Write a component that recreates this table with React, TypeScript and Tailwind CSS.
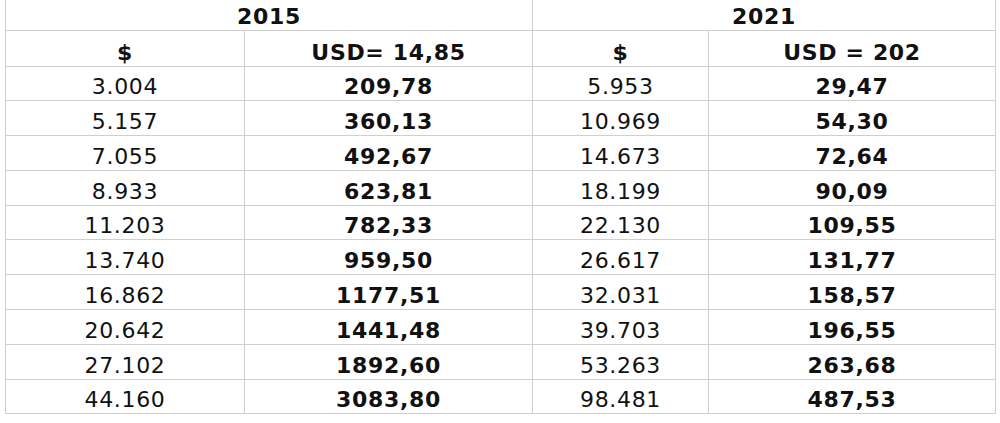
const rows: [string, string, string, string][] = [
  ["3.004", "209,78", "5.953", "29,47"],
  ["5.157", "360,13", "10.969", "54,30"],
  ["7.055", "492,67", "14.673", "72,64"],
  ["8.933", "623,81", "18.199", "90,09"],
  ["11.203", "782,33", "22.130", "109,55"],
  ["13.740", "959,50", "26.617", "131,77"],
  ["16.862", "1177,51", "32.031", "158,57"],
  ["20.642", "1441,48", "39.703", "196,55"],
  ["27.102", "1892,60", "53.263", "263,68"],
  ["44.160", "3083,80", "98.481", "487,53"],
];

const cell = "border border-[#cfcfcf] text-center align-bottom pb-[2px] leading-[22px]";

export default function App() {
  return (
    <div className="w-[1000px] h-[423px] bg-white pl-[5px] text-[#111] font-['DejaVu_Sans',sans-serif] text-[22px] tracking-[0.03em]">
      <table className="table-fixed border-collapse w-[990px]">
        <colgroup>
          <col className="w-[239px]" />
          <col className="w-[288px]" />
          <col className="w-[176px]" />
          <col className="w-[287px]" />
        </colgroup>
        <thead>
          <tr className="h-[30px]">
            <th colSpan={2} className={`${cell} border-t-0 font-bold`}>2015</th>
            <th colSpan={2} className={`${cell} border-t-0 font-bold`}>2021</th>
          </tr>
          <tr className="h-[36px]">
            <th className={`${cell} font-bold`}>$</th>
            <th className={`${cell} font-bold`}>USD= 14,85</th>
            <th className={`${cell} font-bold`}>$</th>
            <th className={`${cell} font-bold`}>USD = 202</th>
          </tr>
        </thead>
        <tbody>
          {rows.map((r) => (
            <tr key={r[0]} className="h-[34.8px]">
              <td className={`${cell} font-normal`}>{r[0]}</td>
              <td className={`${cell} font-bold`}>{r[1]}</td>
              <td className={`${cell} font-normal`}>{r[2]}</td>
              <td className={`${cell} font-bold`}>{r[3]}</td>
            </tr>
          ))}
        </tbody>
      </table>
    </div>
  );
}
